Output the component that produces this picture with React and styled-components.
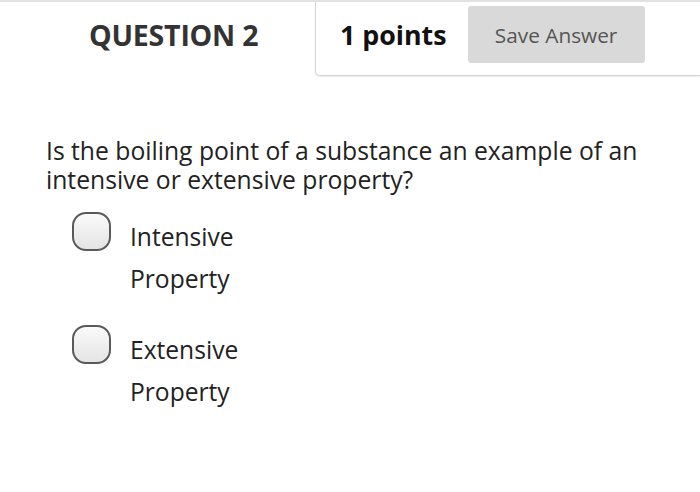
import React from 'react'
import styled, {createGlobalStyle} from 'styled-components'

const Global = createGlobalStyle`
  html, body { margin: 0; padding: 0; background: #fff; }
  body { font-family: "Open Sans", "Liberation Sans", sans-serif; }
`

const Page = styled.div`
  width: 700px;
  height: 492px;
  overflow: hidden;
  border-top: 2px solid #e2e2e2;
  box-sizing: border-box;
`

const Header = styled.div`
  display: flex;
  align-items: flex-start;
  height: 74px;
`

const QuestionTitle = styled.h2`
  margin: 0;
  width: 315px;
  padding: 14px 0 0 89px;
  box-sizing: border-box;
  font-size: 28.5px;
  font-weight: 700;
  color: #333;
  letter-spacing: -0.2px;
`

const PointsBox = styled.div`
  flex: 1;
  display: flex;
  align-items: center;
  gap: 21px;
  height: 74px;
  padding-left: 24px;
  border: 1px solid #d4d4d4;
  border-top: none;
  border-right: none;
  border-bottom-left-radius: 5px;
  box-shadow: 0 1px 2px rgba(0,0,0,0.08);
  box-sizing: border-box;
`

const Points = styled.span`
  font-size: 26.8px;
  font-weight: 700;
  color: #111;
  margin-top: -8px;
`

const SaveButton = styled.button`
  width: 177px;
  height: 57px;
  margin-top: -8px;
  border: none;
  border-radius: 3px;
  background: #d9d9d9;
  color: #555;
  font-family: inherit;
  font-size: 20.8px;
`

const Body = styled.div`
  padding: 60px 0 0 46px;
`

const Question = styled.p`
  margin: 0;
  font-size: 24.7px;
  line-height: 29px;
  color: #222;
`

const Options = styled.div`
  display: flex;
  flex-direction: column;
  gap: 25px;
  margin-top: 18px;
  padding-left: 26px;
`

const Option = styled.label`
  display: flex;
  align-items: flex-start;
  gap: 19px;
`

const Radio = styled.span`
  width: 35px;
  height: 35px;
  flex: none;
  border: 2px solid #5a5a5a;
  border-radius: 14px;
  background: linear-gradient(#fafafa, #e4e4e4);
`

const OptionText = styled.span`
  width: 130px;
  padding-top: 4px;
  font-size: 24.6px;
  line-height: 42px;
  color: #222;
`

const options = ['Intensive Property', 'Extensive Property']

export default function App() {
  return (
    <Page>
      <Global />
      <Header>
        <QuestionTitle>QUESTION 2</QuestionTitle>
        <PointsBox>
          <Points>1 points</Points>
          <SaveButton>Save Answer</SaveButton>
        </PointsBox>
      </Header>
      <Body>
        <Question>Is the boiling point of a substance an example of an intensive or extensive property?</Question>
        <Options>
          {options.map(o => (
            <Option key={o}>
              <Radio />
              <OptionText>{o}</OptionText>
            </Option>
          ))}
        </Options>
      </Body>
    </Page>
  )
}
